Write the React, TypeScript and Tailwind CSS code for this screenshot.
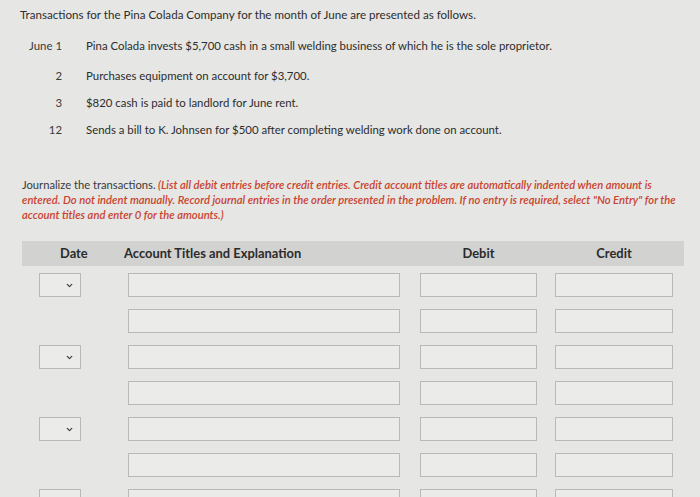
import React from 'react';
import { ChevronDown } from 'lucide-react';

// Transactions listed in the problem
const transactions = [
  { date: 'June 1', text: 'Pina Colada invests $5,700 cash in a small welding business of which he is the sole proprietor.' },
  { date: '2', text: 'Purchases equipment on account for $3,700.' },
  { date: '3', text: '$820 cash is paid to landlord for June rent.' },
  { date: '12', text: 'Sends a bill to K. Johnsen for $500 after completing welding work done on account.' },
];

const rows = [true, false, true, false, true, false, true];

const Field: React.FC<{ className: string }> = ({ className }) => (
  <div className={`h-[24px] border border-[#b9b9b7] bg-[#ebebe9] ${className}`} />
);

const App: React.FC = () => {
  return (
    <div
      className="w-[700px] h-[497px] overflow-hidden bg-[#e6e6e4] text-[#333] relative"
      style={{ fontFamily: 'Lato, "Open Sans", sans-serif' }}
    >
      <div className="pt-[7px] pl-[20px] text-[11.6px] leading-[16px] text-[#2d2d2d]">
        Transactions for the Pina Colada Company for the month of June are presented as follows.
      </div>

      <div className="mt-[15px] flex flex-col">
        {transactions.map((t, i) => (
          <div key={i} className={`flex items-center h-[16px] ${i === 0 ? '' : i === 1 ? 'mt-[14px]' : 'mt-[11px]'}`}>
            <div className="w-[62px] text-right text-[11.4px] text-[#3a3a3a]">{t.date}</div>
            <div className="ml-[24px] text-[11.4px] text-[#2d2d2d]">{t.text}</div>
          </div>
        ))}
      </div>

      <p className="mt-[39px] pl-[22px] text-[11.2px] leading-[15px] text-[#c9432f] italic font-semibold whitespace-nowrap">
        <span className="text-[#3a3a3a] not-italic font-normal">Journalize the transactions.</span>{' '}
        (List all debit entries before credit entries. Credit account titles are automatically indented when amount is
        <br />
        entered. Do not indent manually. Record journal entries in the order presented in the problem. If no entry is required, select "No Entry" for the
        <br />
        account titles and enter 0 for the amounts.)
      </p>

      <div className="mt-[19px] ml-[22px] w-[662px]">
        <div className="h-[25px] bg-[#d2d2d0] flex items-center text-[12.9px] font-bold text-[#2b2b2b]">
          <div className="w-[102px] pl-[38px]">Date</div>
          <div className="w-[296px]">Account Titles and Explanation</div>
          <div className="w-[117px] text-center">Debit</div>
          <div className="w-[18px]" />
          <div className="w-[118px] text-center">Credit</div>
        </div>

        <div className="pt-[7px] flex flex-col gap-[12px]">
          {rows.map((hasDate, i) => (
            <div key={i} className="flex items-center">
              <div className="w-[17px]" />
              {hasDate ? (
                <div className="w-[42px] h-[24px] border border-[#b9b9b7] bg-[#ebebe9] flex items-center justify-end pr-[6px]">
                  <ChevronDown size={9} strokeWidth={3.5} className="text-[#444]" />
                </div>
              ) : (
                <div className="w-[42px]" />
              )}
              <div className="w-[47px]" />
              <Field className="w-[272px]" />
              <div className="w-[20px]" />
              <Field className="w-[117px]" />
              <div className="w-[18px]" />
              <Field className="w-[118px]" />
            </div>
          ))}
        </div>
      </div>
    </div>
  );
};

export default App;
